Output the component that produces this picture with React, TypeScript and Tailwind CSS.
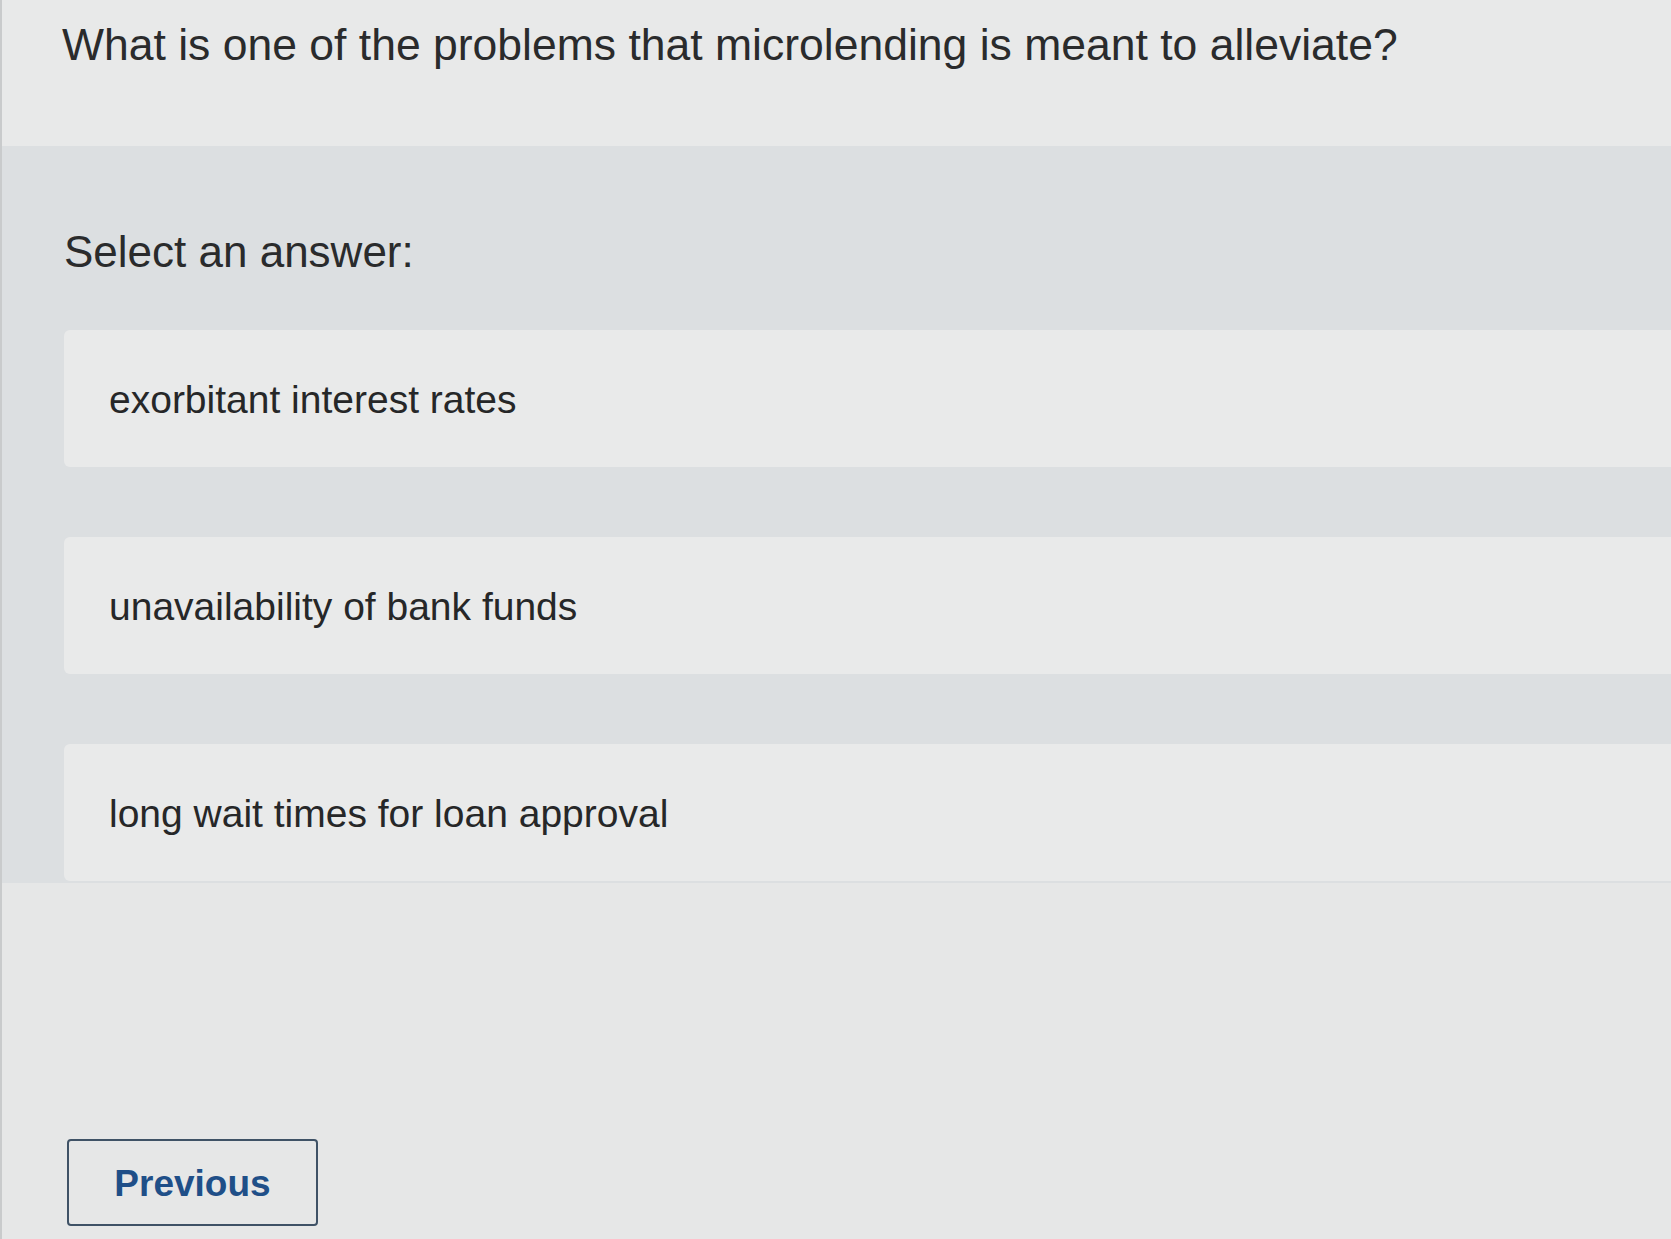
const options = [
  'exorbitant interest rates',
  'unavailability of bank funds',
  'long wait times for loan approval',
]

export default function App() {
  return (
    <div
      className="flex min-h-[1239px] w-full flex-col overflow-hidden border-l-2 border-[#c9cbcc] bg-[#e6e7e7] text-[#2a2b2c]"
      style={{ fontFamily: '"Liberation Sans", Arial, sans-serif' }}
    >
      {/* Question */}
      <header className="h-[146px] shrink-0 bg-[#e8e9e9] pl-[60px] pt-[23px]">
        <h1 className="text-[44.5px] leading-none font-normal">
          What is one of the problems that microlending is meant to alleviate?
        </h1>
      </header>

      {/* Answers */}
      <section className="shrink-0 bg-[#dcdfe1] pb-[2px] pl-[62px] pt-[84px]">
        <p className="text-[44px] leading-none">Select an answer:</p>
        <div className="mt-[56px] flex flex-col gap-[70px]">
          {options.map(o => (
            <button
              key={o}
              className="flex h-[137px] w-full items-center rounded-l-md bg-[#e9eaea] pl-[45px] pt-[2px] text-left text-[39px] leading-none text-[#262728]"
            >
              {o}
            </button>
          ))}
        </div>
      </section>

      {/* Footer */}
      <footer className="flex-1 pl-[65px] pt-[256px]">
        <button className="flex h-[87px] w-[251px] items-center justify-center rounded-[4px] border-2 border-[#3f5266] pt-[2px] text-[37px] font-bold leading-none text-[#1f4f88]">
          Previous
        </button>
      </footer>
    </div>
  )
}
